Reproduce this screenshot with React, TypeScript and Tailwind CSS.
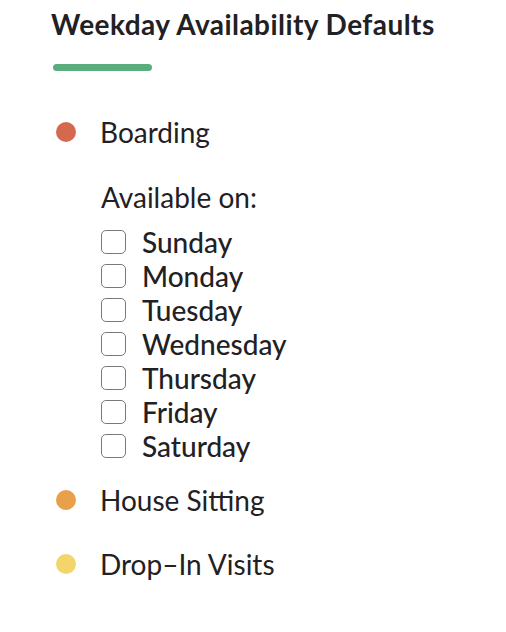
import React from 'react';

const days = ['Sunday', 'Monday', 'Tuesday', 'Wednesday', 'Thursday', 'Friday', 'Saturday'];

const Dot = ({ color }: { color: string }) => (
  <span className={`w-5 h-5 rounded-full shrink-0 ${color}`}></span>
);

export default function App() {
  return (
    <div className="min-h-screen bg-white pl-[56px] pt-[7px] text-[#1f2124] font-['Lato','Liberation_Sans',sans-serif]">
      <h2 className="-ml-[5px] text-[28px] leading-[34px] font-bold tracking-[0.45px]">Weekday Availability Defaults</h2>
      <div className="-ml-[3px] mt-[23px] w-[99px] h-[7px] rounded-full bg-[#5aae7e]"></div>

      <div className="mt-[44px]">
        <div className="flex items-center gap-[24px] h-[34px]">
          <Dot color="bg-[#d4694f]" />
          <span className="text-[28px] leading-[34px]">Boarding</span>
        </div>

        <div className="ml-[45px] mt-[31px]">
          <div className="text-[28px] leading-[34px]">Available on:</div>
          <ul className="mt-[11px] flex flex-col">
            {days.map((d) => (
              <li key={d} className="flex items-center gap-[16px] h-[34px]">
                <span className="w-[25px] h-[24px] rounded-[5px] border-[1.5px] border-[#7a7a7a] bg-white"></span>
                <span className="text-[28px] leading-[34px] font-medium">{d}</span>
              </li>
            ))}
          </ul>
        </div>

        <div className="flex items-center gap-[24px] h-[34px] mt-[20px]">
          <Dot color="bg-[#e8a04b]" />
          <span className="text-[28px] leading-[34px]">House Sitting</span>
        </div>
        <div className="flex items-center gap-[24px] h-[34px] mt-[30px]">
          <Dot color="bg-[#f4d56b]" />
          <span className="text-[28px] leading-[34px]">Drop–In Visits</span>
        </div>
      </div>
    </div>
  );
}
